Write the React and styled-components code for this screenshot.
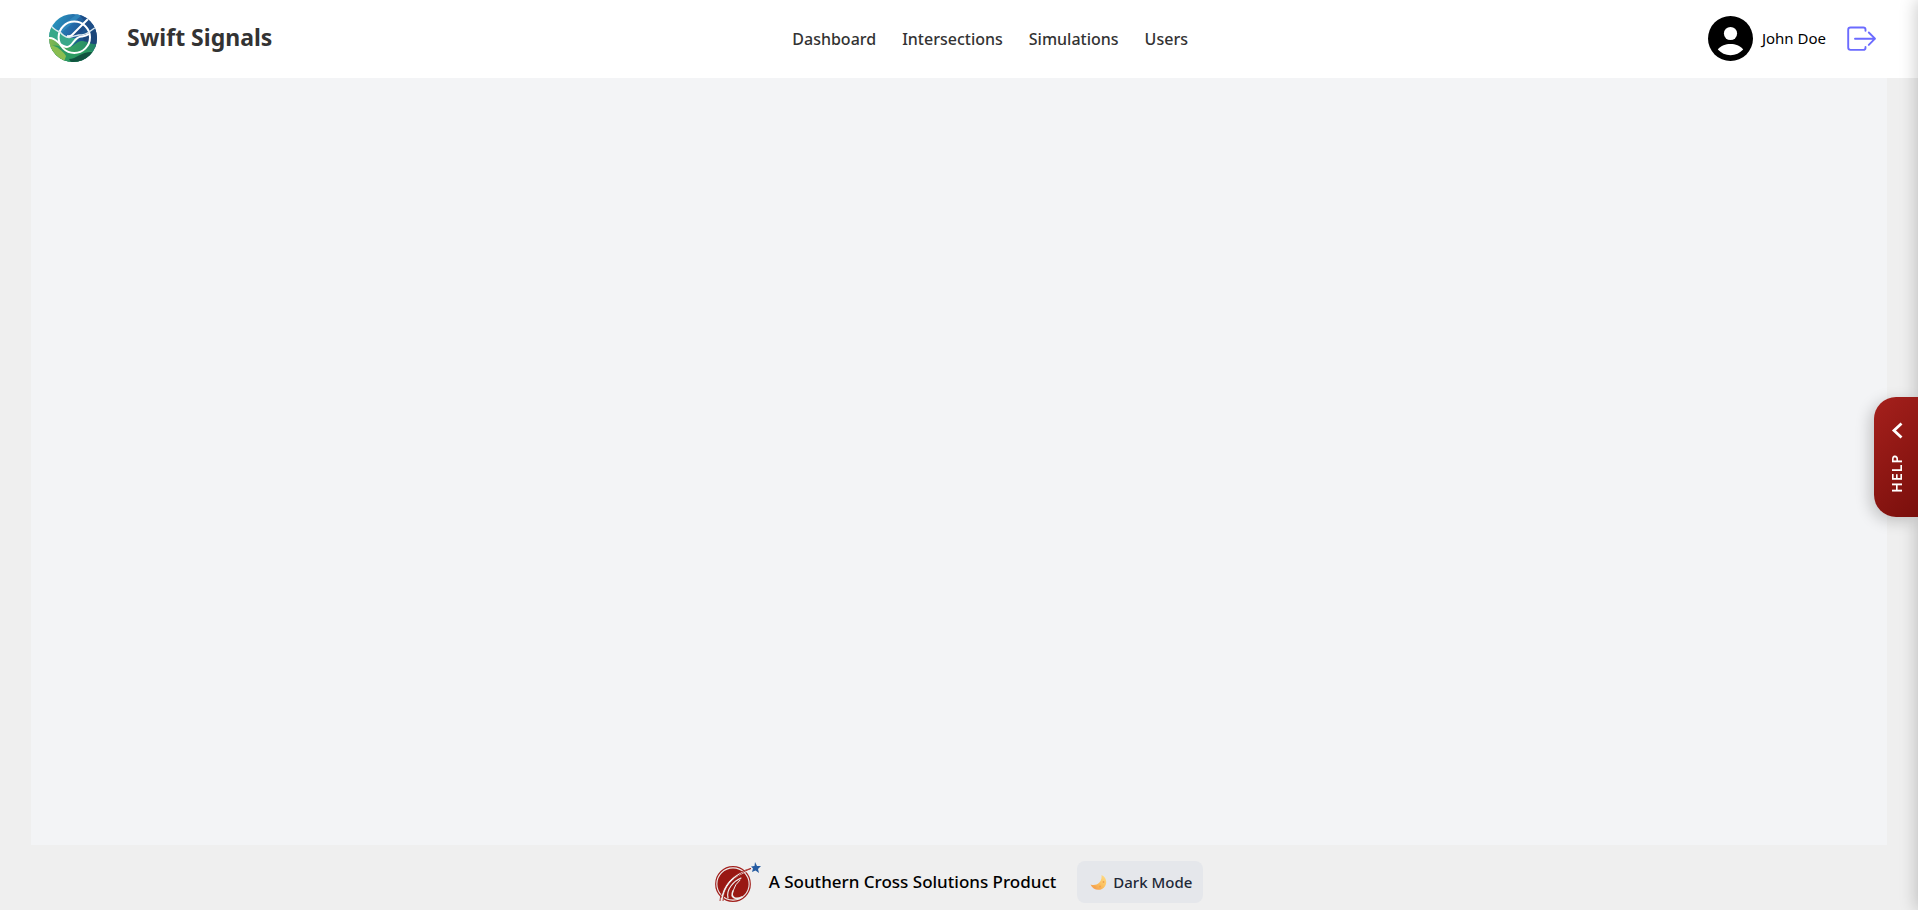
import React from "react";
import styled, { createGlobalStyle } from "styled-components";

const GlobalStyle = createGlobalStyle`
  *, *::before, *::after { box-sizing: border-box; }
  body {
    margin: 0;
    background: #efefef;
    font-family: "Noto Sans", "Open Sans", sans-serif;
    color: #000;
  }
  button { font-family: inherit; }
`;

const Page = styled.div`
  display: flex;
  flex-direction: column;
  min-height: 100vh;
`;

const Header = styled.header`
  display: flex;
  align-items: center;
  justify-content: space-between;
  height: 78px;
  padding: 0 41px 0 49px;
  background: #fff;
`;

const Brand = styled.a`
  display: flex;
  align-items: center;
  gap: 30px;
  padding-bottom: 2px;
  color: #333;
  text-decoration: none;
`;

const BrandName = styled.span`
  padding-bottom: 2px;
  font-size: 23px;
  line-height: 32px;
  font-weight: 700;
`;

const Nav = styled.nav`
  display: flex;
  gap: 26px;
`;

const NavLink = styled.a`
  color: #333;
  text-decoration: none;
  font-size: 16px;
  line-height: 28px;
  font-weight: 500;
`;

const Account = styled.div`
  display: flex;
  align-items: center;
  padding-bottom: 2px;
  font-size: 15px;
  line-height: 24px;
`;

const UserName = styled.span`
  margin: 0 20px 0 9px;
`;

const IconButton = styled.button`
  display: flex;
  padding: 0;
  border: 0;
  background: none;
  color: #6b6bff;
  cursor: pointer;
`;

const Main = styled.main`
  flex: 1;
  margin: 0 31px;
  background: #f3f4f6;
`;

const Footer = styled.footer`
  display: flex;
  align-items: center;
  justify-content: center;
  height: 65px;
  padding-top: 9px;
`;

const Company = styled.span`
  margin: 0 21px 0 8px;
  font-size: 17px;
  line-height: 28px;
  font-weight: 500;
`;

const ThemeButton = styled.button`
  display: flex;
  align-items: center;
  gap: 6px;
  height: 42px;
  padding: 0 11px 0 13px;
  border: 0;
  border-radius: 8px;
  background: #e5e7eb;
  color: #1f2937;
  font-size: 15px;
  line-height: 24px;
  font-weight: 500;
  cursor: pointer;
`;

const HelpDrawer = styled.aside`
  position: fixed;
  top: 0;
  bottom: 0;
  left: 100%;
  width: 400px;
  background: #fff;
  box-shadow: -2px 0 16px rgba(0, 0, 0, 0.2);
`;

const HelpTab = styled.button`
  position: fixed;
  top: 50%;
  right: 0;
  transform: translateY(-50%);
  margin-top: 2px;
  display: flex;
  flex-direction: column;
  align-items: center;
  justify-content: center;
  gap: 15px;
  width: 44px;
  height: 120px;
  padding: 0 0 0 2px;
  border: 0;
  border-radius: 22px 0 0 22px;
  background: linear-gradient(135deg, #a5201c, #7a0f0c);
  box-shadow: -4px 4px 15px rgba(0, 0, 0, 0.2);
  color: #fff;
  cursor: pointer;
`;

const HelpLabel = styled.span`
  writing-mode: vertical-rl;
  rotate: 180deg;
  font-size: 14px;
  line-height: 20px;
  font-weight: 600;
  letter-spacing: 1px;
`;

function SignalsLogo() {
  return (
    <svg width="48" height="48" viewBox="0 0 48 48" aria-hidden="true">
      <defs>
        <clipPath id="disc"><circle cx="24" cy="24" r="24" /></clipPath>
        <linearGradient id="sky" x1="0" y1="0" x2="1" y2="0.5">
          <stop offset="0" stopColor="#2aa5c4" />
          <stop offset="0.5" stopColor="#2469a8" />
          <stop offset="1" stopColor="#163f70" />
        </linearGradient>
        <linearGradient id="field" x1="0" y1="0" x2="1" y2="0">
          <stop offset="0" stopColor="#86b84f" />
          <stop offset="0.45" stopColor="#36a162" />
          <stop offset="1" stopColor="#208267" />
        </linearGradient>
      </defs>
      <g clipPath="url(#disc)">
        <rect width="48" height="48" fill="url(#sky)" />
        <path d="M10 14 L28 0 H34 L12 19Z" fill="#2f86bb" />
        <path d="M30 0 H48 V18 L37 14 L31 20 L19 23 L36 8Z" fill="#1d4d87" />
        <path d="M0 12 L10 17 L19 24 L30 24 L22 33 L12 31 L0 23Z" fill="#38a889" />
        <path d="M34 24 L48 15 V34 L37 31Z" fill="#1c4779" />
        <path d="M0 23 C8 23 10 33 19 33 C26 33 27 26 34 27 C40 28 43 31 48 30 V48 H0Z" fill="url(#field)" />
        <path d="M2 32 C12 29 17 39 26 38 C34 36 36 34 45 38 L30 48 H0Z" fill="#2b9a61" />
        <path d="M0 31 C8 32 13 36 17 42 L15 48 H0Z" fill="#8abd50" />
        <path d="M20 45 C28 45 32 37 45 38 L36 48 H22Z" fill="#11533f" />
        <g fill="none" stroke="#fff" strokeWidth="2">
          <circle cx="25.3" cy="23.3" r="15.7" />
          <path d="M39 5 L23 21 Q21 23 18 22" />
          <path d="M2 12 Q7 17 11 18 Q15 23 20 23.5 Q25 22 30 21 Q36 21 40 18 L47 13" stroke="#dce9ee" strokeWidth="1.5" />
          <path d="M0 24 C8 23 10 33 18 33 C24 33 25 22 33 22.5 Q37 22 40 20" />
        </g>
      </g>
    </svg>
  );
}

function Avatar() {
  return (
    <svg width="45" height="45" viewBox="0 0 45 45" role="img" aria-label="Profile">
      <circle cx="22.5" cy="22.5" r="22.5" />
      <circle cx="22.5" cy="17.5" r="6.6" fill="#fff" />
      <path d="M9.8 33.5 C13 29.5 17.5 28 22.5 28 S32 29.5 35.2 33.5 C32 37 27.5 39.2 22.5 39.2 S13 37 9.8 33.5Z" fill="#fff" />
    </svg>
  );
}

function LogoutIcon() {
  return (
    <svg width="31" height="30" viewBox="0 0 31 30" fill="none" stroke="currentColor" strokeWidth="1.9" strokeLinecap="round" strokeLinejoin="round" aria-hidden="true">
      <path d="M19.5 7.8 V6.5 Q19.5 4.5 17.3 4.5 H4.5 Q2.2 4.5 2.2 6.8 V24.6 Q2.2 26.900 4.5 26.900 H17.3 Q19.5 26.900 19.5 24.7 V24" />
      <path d="M9 15.7 H29 M22.8 9.5 L29 15.7 L22.8 21.9" />
    </svg>
  );
}

function CrossLogo() {
  return (
    <svg width="46" height="40" viewBox="0 0 46 40" aria-hidden="true">
      <circle cx="18" cy="22" r="17.3" fill="none" stroke="#a3221e" strokeWidth="1.2" />
      <circle cx="18" cy="22" r="15.6" fill="#991813" />
      <g fill="none" stroke="#efefef" strokeLinecap="round">
        <path d="M7 39 C8 26 16 14 34 8" strokeWidth="2" />
        <path d="M13 36 C11 27 19 19 26 16" strokeWidth="1.2" />
        <path d="M18 29 C15 36 21 38 27 35" strokeWidth="1.6" />
        <path d="M18 29 Q20 22 25 18" strokeWidth="1" />
      </g>
      <path d="M5 39 C6 25 17 11 36 6.5 C20 13 9 25 8 39" fill="none" stroke="#a3221e" strokeWidth="0.9" />
      <path d="M40 0 L42 4 L46 4 L43 7 L44 11 L40.5 8.5 L37 10 L38 6.5 L36 4.5 L39.5 4Z" fill="#255ba1" />
    </svg>
  );
}

function Moon() {
  return (
    <svg width="17" height="17" viewBox="0 0 17 17" aria-hidden="true">
      <defs>
        <linearGradient id="moon" x1="1" y1="0" x2="0.2" y2="1">
          <stop offset="0" stopColor="#ffe08a" />
          <stop offset="0.6" stopColor="#fbbd5b" />
          <stop offset="1" stopColor="#f39a4c" />
        </linearGradient>
      </defs>
      <path d="M11.5 1 C18 4 17.5 12 12 15 C8 17 2.5 15.5 0.5 10.5 C6 12.5 12.5 9 11.5 1Z" fill="url(#moon)" />
      <g fill="#f0a04d"><circle cx="13.5" cy="8" r="0.9" /><circle cx="10" cy="12.5" r="0.9" /><circle cx="5" cy="13" r="0.7" /></g>
    </svg>
  );
}

const links = ["Dashboard", "Intersections", "Simulations", "Users"];

export default function App() {
  return (
    <Page>
      <GlobalStyle />
      <Header>
        <Brand href="#home"><SignalsLogo /><BrandName>Swift Signals</BrandName></Brand>
        <Nav aria-label="Main">
          {links.map((name) => (
            <NavLink key={name} href={`#${name.toLowerCase()}`}>{name}</NavLink>
          ))}
        </Nav>
        <Account>
          <Avatar />
          <UserName>John Doe</UserName>
          <IconButton type="button" aria-label="Log out"><LogoutIcon /></IconButton>
        </Account>
      </Header>
      <Main />
      <Footer>
        <CrossLogo />
        <Company>A Southern Cross Solutions Product</Company>
        <ThemeButton type="button"><Moon />Dark Mode</ThemeButton>
      </Footer>
      <HelpDrawer aria-hidden="true" />
      <HelpTab type="button">
        <svg width="12" height="17" viewBox="0 0 12 17" fill="none" stroke="currentColor" strokeWidth="2.8" aria-hidden="true">
          <path d="M10.500 1.500 L3 8.500 L10.500 15.500" />
        </svg>
        <HelpLabel>HELP</HelpLabel>
      </HelpTab>
    </Page>
  );
}
